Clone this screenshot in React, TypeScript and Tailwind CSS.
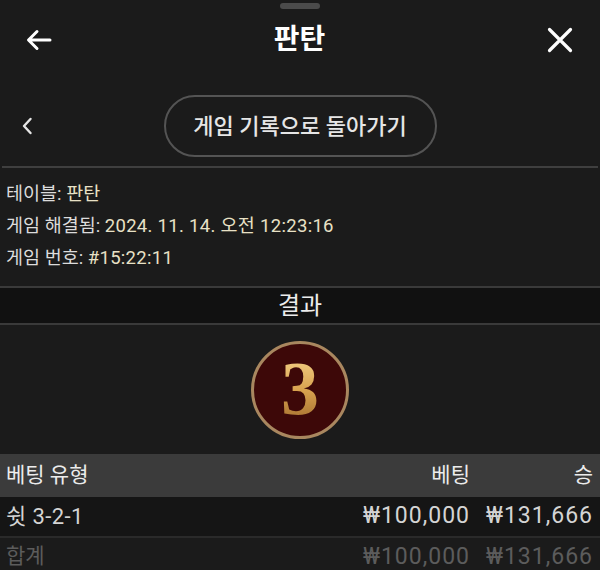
import React from 'react';

const font = { fontFamily: 'Roboto, "Noto Sans CJK KR", sans-serif' };

const rows = [
  { type: '쉿 3-2-1', bet: '₩100,000', win: '₩131,666' },
];

const App: React.FC = () => {
  return (
    <div
      className="w-[600px] h-[570px] overflow-hidden bg-[#1b1b1b] text-[#e6e6e6] font-['Roboto','Noto_Sans_CJK_KR',sans-serif]"
      style={font}
    >
      {/* drag handle */}
      <div className="pt-[3px]">
        <div className="mx-auto w-[40px] h-[6px] rounded-full bg-[#4b4b4b]" />
      </div>

      {/* Header */}
      <div className="flex items-center h-[62px] pl-[26px] pr-[27px]">
        <svg width="26" height="22" viewBox="0 0 26 22" fill="none" stroke="#fff" strokeWidth="3" strokeLinecap="round" strokeLinejoin="round">
          <path d="M24 11H3M11 2.5L2.5 11l8.5 8.5" />
        </svg>
        <h1 className="flex-1 text-center text-[28px] font-bold text-white leading-none">판탄</h1>
        <svg width="26" height="26" viewBox="0 0 26 26" fill="none" stroke="#fff" strokeWidth="3.2" strokeLinecap="round">
          <path d="M2.5 2.5l21 21M23.5 2.5l-21 21" />
        </svg>
      </div>

      {/* Back to history */}
      <div className="grid grid-cols-[1fr_auto_1fr] items-center mt-[24px] mb-[9px]">
        <div className="pl-[21px]">
          <svg width="12" height="18" viewBox="0 0 12 18" fill="none" stroke="#e6e6e6" strokeWidth="2.4" strokeLinecap="round" strokeLinejoin="round">
            <path d="M9.5 2L3 9l6.5 7" />
          </svg>
        </div>
        <button className="w-[273px] h-[62px] rounded-full border-2 border-[#545454] text-[22px] text-[#e6e6e6] font-medium">
          게임 기록으로 돌아가기
        </button>
        <div />
      </div>
      <div className="mx-[2px] h-[2px] bg-[#3f3f3f]" />

      {/* Info */}
      <div className="pt-[10px] pb-[12px] px-[6px] text-[18.5px] leading-[32px]">
        <div>
          <span className="text-[#dcdcdc]">테이블: </span>
          <span className="text-[#e8e1c6]">판탄</span>
        </div>
        <div>
          <span className="text-[#dcdcdc]">게임 해결됨: </span>
          <span className="text-[#e8e1c6] tracking-[0.3px]">2024. 11. 14. 오전 12:23:16</span>
        </div>
        <div>
          <span className="text-[#dcdcdc]">게임 번호: </span>
          <span className="text-[#e8e1c6] tracking-[0.3px]">#15:22:11</span>
        </div>
      </div>

      {/* Result band */}
      <div className="h-[39px] border-y-2 border-[#3a3a3a] bg-[#111111] flex items-center justify-center text-[24px] text-[#ececec]">
        결과
      </div>

      {/* Result ball */}
      <div className="flex justify-center mt-[16px] mb-[15px]">
        <div className="w-[98px] h-[98px] rounded-full bg-[#3d0808] border-[3px] border-[#a9875f] flex items-center justify-center">
          <span className="font-['Liberation_Serif',serif] font-bold text-[76px] leading-none bg-linear-to-b from-[#f7d98f] via-[#d9a24f] to-[#9a6629] bg-clip-text text-transparent pb-[4px]">
            3
          </span>
        </div>
      </div>

      {/* Bets table */}
      <div className="text-[21px]">
        <div className="grid grid-cols-[1fr_110px_123px] items-center h-[43px] bg-[#3b3b3b] pl-[6px] pr-[7px] text-[#ececec]">
          <span>베팅 유형</span>
          <span className="text-right">베팅</span>
          <span className="text-right">승</span>
        </div>
        {rows.map((r) => (
          <div
            key={r.type}
            className="grid grid-cols-[1fr_110px_123px] items-center h-[41px] bg-[#151515] border-b-2 border-[#2a2a2a] pl-[6px] pr-[7px] text-[#d4d4d4]"
          >
            <span className="text-[22px] tracking-[0.4px]">{r.type}</span>
            <span className="text-right text-[23px] tracking-[1px]">{r.bet}</span>
            <span className="text-right text-[23px] tracking-[1px]">{r.win}</span>
          </div>
        ))}
        <div className="grid grid-cols-[1fr_110px_123px] items-center h-[38px] pl-[6px] pr-[7px] text-[#5c5c5c]">
          <span>합계</span>
          <span className="text-right text-[23px] tracking-[1px]">₩100,000</span>
          <span className="text-right text-[23px] tracking-[1px]">₩131,666</span>
        </div>
      </div>
    </div>
  );
};

export default App;
